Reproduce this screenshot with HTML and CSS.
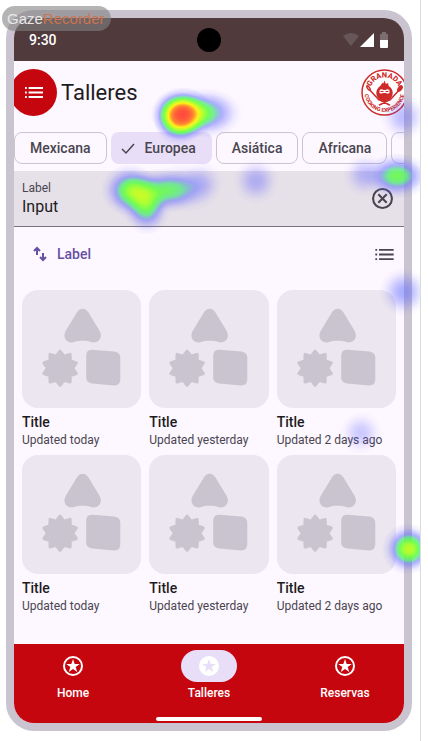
FILE: index.html
```html
<!DOCTYPE html>
<html lang="es">
<head>
<meta charset="utf-8">
<meta name="viewport" content="width=device-width, initial-scale=1">
<title>Talleres</title>
<link rel="stylesheet" href="styles.css">
</head>
<body>
<svg class="defs" aria-hidden="true">
  <symbol id="shapes" viewBox="0 0 119 118">
    <path d="M55 22C58 17.500 63 17.500 66 22L77.500 41C81 48 76 53.500 70 52C63 50.300 58 50.300 51 52C45 53.500 40 48 43.500 41Z"/>
    <path stroke="currentColor" stroke-width="3" stroke-linejoin="round" d="M38 61L41.900 66L48 64.200L48.200 70.600L54.200 72.700L50.600 78L54.200 83.300L48.200 85.400L48 91.800L41.900 90L38 95L34.100 90L28 91.800L27.800 85.400L21.800 83.300L25.400 78L21.800 72.700L27.800 70.600L28 64.200L34.100 66Z"/>
    <path d="M70 59.500L92 61.300Q98 62 98 68V89Q98 95.500 91.500 95.200L70 93.300Q64 92.500 64 87V65.500Q64 59.200 70 59.500Z"/>
  </symbol>
  <symbol id="list" viewBox="0 0 20 12">
    <path d="M0 0h2v2H0zM4 0h16v2H4zM0 5h2v2H0zM4 5h16v2H4zM0 10h2v2H0zM4 10h16v2H4z"/>
  </symbol>
  <symbol id="star" viewBox="0 0 24 24">
    <path d="M12 5l1.700 4.900 5.100.1-4.100 3.100 1.500 4.900-4.200-2.900L7.800 18l1.500-4.900L5.200 10l5.100-.1z"/>
  </symbol>
</svg>

<div class="stage">
  <div class="phone">
    <div class="status">
      <span class="time">9:30</span>
      <span class="camera"></span>
      <svg class="signals" viewBox="0 0 46 18" aria-hidden="true">
        <path fill="#66565a" d="M0 5Q8-1 16 5L8 15Z"/>
        <path fill="#fff" d="M17 16H31V2Z"/>
        <path fill="#7d6d70" d="M37 3h2V1h4v2h2v6h-8z"/>
        <path fill="#fff" d="M37 9h8v7q0 1-1 1h-6q-1 0-1-1z"/>
      </svg>
    </div>

    <header class="header">
      <button class="menu" aria-label="Menu"><svg><use href="#list"/></svg></button>
      <h1>Talleres</h1>
      <svg class="logo" viewBox="0 0 94 94" role="img" aria-label="Granada Cooking Experience">
        <circle cx="47" cy="47" r="45" fill="#fff" stroke="#cf2a2a" stroke-width="3"/>
        <path id="arc-top" fill="none" d="M17 47A30 30 0 0 1 77 47"/>
        <path id="arc-bottom" fill="none" d="M7 46A40 40 0 0 0 87 46"/>
        <text class="logo-top" text-anchor="middle"><textPath href="#arc-top" startOffset="50%">GRANADA</textPath></text>
        <text class="logo-bottom" text-anchor="middle"><textPath href="#arc-bottom" startOffset="50%">COOKING EXPERIENCE</textPath></text>
        <g fill="#cf2a2a" stroke="#cf2a2a" stroke-width="3" stroke-linecap="round">
          <path d="M14 38L36 62M80 38L58 62M37 72L58 61M57 72L36 61"/>
          <ellipse cx="78" cy="39" rx="3" ry="6" transform="rotate(35 78 39)"/>
          <ellipse cx="15" cy="38" rx="2" ry="5" fill="#fff" transform="rotate(-35 15 38)"/>
          <circle cx="47" cy="48" r="15"/>
          <path d="M40 35L43 30L45 32L47 27L49 32L53 30L54 35Z"/>
        </g>
        <path fill="#fff" d="M37 43q3-4 8-1h4q5-3 8 1v5q-4 2-7 0h-6q-4 2-7 0z"/>
        <path stroke="#cf2a2a" stroke-width="2" d="M39 45h6M49 45h6"/>
      </svg>
    </header>

    <div class="chips">
      <button class="chip">Mexicana</button>
      <button class="chip selected" aria-pressed="true"><svg viewBox="0 0 18 18" aria-hidden="true"><path d="M3 10l4 4 8-9"/></svg>Europea</button>
      <button class="chip">Asiática</button>
      <button class="chip">Africana</button>
      <button class="chip blank" aria-label="Más"></button>
    </div>

    <div class="field">
      <div class="field-text">
        <label for="search">Label</label>
        <input id="search" type="text" value="Input">
      </div>
      <button class="clear" aria-label="Borrar"><svg viewBox="0 0 20 20"><circle cx="10" cy="10" r="9"/><path d="M6 6l8 8M14 6l-8 8"/></svg></button>
    </div>

    <div class="toolbar">
      <button class="sort"><svg viewBox="0 0 14 16" aria-hidden="true"><path d="M4 9V2M1 5l3-3 3 3M10 7v7M7 11l3 3 3-3"/></svg>Label</button>
      <button class="view" aria-label="Lista"><svg><use href="#list"/></svg></button>
    </div>

    <main class="grid">
      <article><svg class="thumb" viewBox="0 0 119 118"><use href="#shapes"/></svg><h2>Title</h2><p>Updated today</p></article>
      <article><svg class="thumb" viewBox="0 0 119 118"><use href="#shapes"/></svg><h2>Title</h2><p>Updated yesterday</p></article>
      <article><svg class="thumb" viewBox="0 0 119 118"><use href="#shapes"/></svg><h2>Title</h2><p>Updated 2 days ago</p></article>
      <article><svg class="thumb" viewBox="0 0 119 118"><use href="#shapes"/></svg><h2>Title</h2><p>Updated today</p></article>
      <article><svg class="thumb" viewBox="0 0 119 118"><use href="#shapes"/></svg><h2>Title</h2><p>Updated yesterday</p></article>
      <article><svg class="thumb" viewBox="0 0 119 118"><use href="#shapes"/></svg><h2>Title</h2><p>Updated 2 days ago</p></article>
    </main>

    <footer class="bottom">
      <nav>
        <a href="#home"><span class="pill"><svg viewBox="0 0 24 24"><circle cx="12" cy="12" r="9"/><use href="#star"/></svg></span>Home</a>
        <a href="#talleres" class="active" aria-current="page"><span class="pill"><svg viewBox="0 0 24 24"><circle cx="12" cy="12" r="9"/><use href="#star"/></svg></span>Talleres</a>
        <a href="#reservas"><span class="pill"><svg viewBox="0 0 24 24"><circle cx="12" cy="12" r="9"/><use href="#star"/></svg></span>Reservas</a>
      </nav>
      <span class="handle"></span>
    </footer>
  </div>

  <!-- Gaze heat: blob opacity is intensity, the filter maps it to colour -->
  <svg class="heat" aria-hidden="true">
    <defs>
      <radialGradient id="blob">
        <stop offset="0" stop-color="#000"/>
        <stop offset=".2" stop-color="#000" stop-opacity=".9"/>
        <stop offset=".4" stop-color="#000" stop-opacity=".64"/>
        <stop offset=".6" stop-color="#000" stop-opacity=".34"/>
        <stop offset=".8" stop-color="#000" stop-opacity=".1"/>
        <stop offset="1" stop-color="#000" stop-opacity="0"/>
      </radialGradient>
      <filter id="ramp" filterUnits="userSpaceOnUse" x="0" y="0" width="100%" height="100%" color-interpolation-filters="sRGB">
        <feColorMatrix values="0 0 0 1 0  0 0 0 1 0  0 0 0 1 0  0 0 0 1 0"/>
        <feComponentTransfer>
          <feFuncR type="table" tableValues=".35 .35 .35 .3 .4 .7 1 1 1"/>
          <feFuncG type="table" tableValues=".35 .35 .4 .9 1 1 .95 .5 .25"/>
          <feFuncB type="table" tableValues="1 1 1 .5 .25 .15 .05 .15 .2"/>
          <feFuncA type="table" tableValues="0 .25 .5 .75 .9 .95 .95 .95 .95"/>
        </feComponentTransfer>
      </filter>
    </defs>
    <g filter="url(#ramp)" fill="url(#blob)">
      <ellipse cx="183" cy="114" rx="32" ry="27"/>
      <ellipse cx="179" cy="118" rx="26" ry="27" opacity=".7"/>
      <ellipse cx="205" cy="113" rx="37" ry="25" opacity=".45"/>
      <ellipse cx="130" cy="190" rx="29" ry="26" opacity=".5"/>
      <ellipse cx="141" cy="197" rx="28" ry="28" opacity=".32"/>
      <ellipse cx="147" cy="208" rx="23" ry="27" opacity=".4"/>
      <ellipse cx="162" cy="191" rx="38" ry="23" opacity=".42"/>
      <ellipse cx="185" cy="188" rx="36" ry="24" opacity=".24"/>
      <ellipse cx="202" cy="182" rx="22" ry="22" opacity=".1"/>
      <circle cx="256" cy="181" r="23" opacity=".2"/>
      <circle cx="404" cy="117" r="24" opacity=".2"/>
      <circle cx="365" cy="175" r="22" opacity=".18"/>
      <ellipse cx="397" cy="176" rx="33" ry="23" opacity=".5"/>
      <circle cx="404" cy="292" r="25" opacity=".26"/>
      <circle cx="361" cy="433" r="22" opacity=".15"/>
      <circle cx="408" cy="549" r="26" opacity=".58"/>
      <circle cx="412" cy="549" r="21" opacity=".2"/>
    </g>
  </svg>
  <div class="badge">Gaze<span>Recorder</span></div>
</div>
</body>
</html>
```
FILE: styles.css
```css
* { box-sizing: border-box; }

body {
  margin: 0;
  background: #fff;
  color: #1d1b20;
  font-family: Roboto, "Liberation Sans", sans-serif;
}

button {
  font: inherit;
  color: inherit;
  border: 0;
  background: none;
  padding: 0;
}

h1, h2, p { margin: 0; }

.defs { position: absolute; width: 0; height: 0; }

.stage {
  position: relative;
  min-height: 100vh;
  margin-right: 7px;
  padding: 10px 8px 10px 6px;
  border-right: 1px solid #dcdcdc;
}

.phone {
  border: 8px solid #cac4d0;
  border-radius: 28px;
  background: #fdf7ff;
  overflow: hidden;
}

.status {
  display: grid;
  grid-template-columns: 1fr auto 1fr;
  align-items: center;
  height: 43px;
  padding: 0 15px;
  background: #513a3c;
  color: #fff;
}
.time { font-size: 14px; font-weight: 500; line-height: 20px; }
.camera { width: 24px; height: 24px; border-radius: 50%; background: #000; }
.signals { justify-self: end; width: 46px; height: 18px; }

.header {
  display: flex;
  align-items: center;
  gap: 4px;
  padding: 8px 0 16px;
  overflow: hidden;
}
.menu {
  display: grid;
  place-items: center;
  flex: none;
  width: 47px;
  height: 47px;
  margin-left: -4px;
  border-radius: 50%;
  background: #c5060f;
  color: #fff;
}
.menu svg { width: 18px; height: 11px; fill: currentColor; }
h1 { flex: 1; font-size: 22px; font-weight: 400; line-height: 28px; }
.logo { flex: none; width: 47px; height: 47px; margin-right: -4px; }
.logo text { fill: #cf2a2a; font-family: Roboto, "Liberation Sans", sans-serif; font-weight: 800; }
.logo-top { font-size: 15px; }
.logo-bottom { font-size: 11px; }

.chips { display: flex; gap: 4px; overflow: hidden; }
.chip {
  display: flex;
  align-items: center;
  justify-content: center;
  flex: none;
  height: 32px;
  padding: 0 15px;
  border: 1px solid #cac4d0;
  border-radius: 8px;
  color: #49454f;
  font-size: 14px;
  font-weight: 500;
}
.chip.selected { gap: 8px; padding: 0 16px 0 8px; border: 0; background: #e8def8; }
.chip svg { width: 18px; height: 18px; fill: none; stroke: currentColor; stroke-width: 1.500; }
.chip.blank { width: 92px; }

.field {
  display: flex;
  align-items: center;
  margin-top: 7px;
  height: 56px;
  padding: 0 11px 0 8px;
  border-bottom: 1px solid #79747e;
  background: #e6e0e9;
}
.field-text { display: flex; flex: 1; min-width: 0; flex-direction: column; }
.field label { font-size: 12px; line-height: 16px; color: #49454f; }
.field input {
  width: 100%;
  padding: 0;
  border: 0;
  background: none;
  color: inherit;
  font: 16px/22px Roboto, "Liberation Sans", sans-serif;
}
.clear svg { display: block; width: 21px; height: 21px; fill: none; stroke: #49454f; stroke-width: 2; }

.toolbar {
  display: flex;
  align-items: center;
  justify-content: space-between;
  padding: 17px 10px 26px 19px;
}
.sort {
  display: flex;
  align-items: center;
  gap: 10px;
  color: #6750a4;
  font-size: 14px;
  font-weight: 500;
  line-height: 20px;
}
.sort svg { width: 14px; height: 16px; fill: none; stroke: currentColor; stroke-width: 2; }
.view svg { display: block; width: 19px; height: 11px; fill: #49454f; }

.grid {
  display: grid;
  grid-template-columns: repeat(3, minmax(0, 1fr));
  gap: 7px 8px;
  padding: 0 8px 30px;
}
.thumb {
  display: block;
  width: 100%;
  border-radius: 16px;
  background: #ebe6ef;
  color: #cac4d0;
  fill: currentColor;
}
.grid h2 { margin-top: 4px; font-size: 14px; font-weight: 500; line-height: 20px; }
.grid p { font-size: 12px; line-height: 16px; color: #49454f; white-space: nowrap; }

.bottom {
  display: flex;
  flex-direction: column;
  align-items: center;
  gap: 16px;
  padding: 6px 0 2px;
  background: #c5060f;
  color: #fff;
}
nav { display: flex; justify-content: space-between; align-self: stretch; padding: 0 31px; }
nav a {
  display: flex;
  flex-direction: column;
  align-items: center;
  gap: 3px;
  color: inherit;
  font-size: 12px;
  font-weight: 500;
  line-height: 16px;
  text-decoration: none;
}
.pill { display: grid; place-items: center; width: 56px; height: 32px; border-radius: 16px; }
.pill svg { width: 24px; height: 24px; fill: #fff; }
.pill circle { fill: none; stroke: #fff; stroke-width: 2; }
.active .pill { background: #e8def8; }
.active .pill svg { fill: #e8def8; }
.active .pill circle { fill: #fff; }
.handle { width: 106px; height: 4px; border-radius: 2px; background: #fff; }

.heat {
  position: absolute;
  inset: 0;
  width: 100%;
  height: 100%;
  pointer-events: none;
}

.badge {
  position: absolute;
  top: 6px;
  left: 2px;
  padding: 0 6px 0 5px;
  border-radius: 13px;
  background: rgba(130, 130, 130, .6);
  color: #e8e8e8;
  font: 15px/25px "Liberation Sans", sans-serif;
}
.badge span { color: #cc7450; }
```
